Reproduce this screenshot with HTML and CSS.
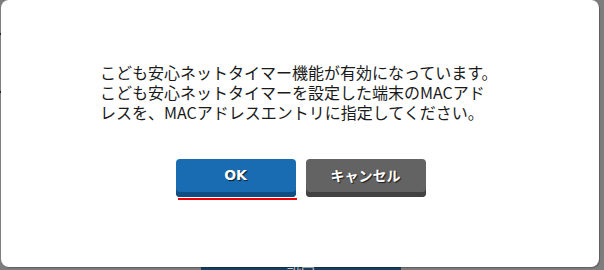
FILE: index.html
```html
<!DOCTYPE html>
<html lang="ja">
<head>
<meta charset="utf-8">
<title>確認</title>
<link rel="stylesheet" href="styles.css">
</head>
<body>
<div class="page">
  <div class="page-spacer">
    <span class="tick tick-a"></span>
    <span class="tick tick-b"></span>
  </div>
  <div class="page-footer">
    <div class="page-bar"><span class="page-bar-text">設定</span></div>
  </div>
</div>
<div class="dialog">
  <p class="message">こども安心ネットタイマー機能が有効になっています。<br>こども安心ネットタイマーを設定した端末のMACアド<br>レスを、MACアドレスエントリに指定してください。</p>
  <div class="actions">
    <button class="btn btn-ok" type="button">OK</button>
    <button class="btn btn-cancel" type="button">キャンセル</button>
  </div>
</div>
</body>
</html>
```
FILE: styles.css
```css
html, body {
  margin: 0;
  padding: 0;
}
body {
  width: 604px;
  height: 270px;
  overflow: hidden;
  background: #7d7d7d;
  font-family: "Noto Sans CJK JP", "Noto Sans", sans-serif;
  position: relative;
}
.page {
  display: flex;
  flex-direction: column;
  height: 270px;
}
.page-spacer {
  flex: 1;
  display: flex;
  flex-direction: column;
}
.tick {
  display: block;
  width: 1px;
  background: #1e1e1e;
}
.tick-a {
  height: 2px;
  margin-top: 33px;
}
.tick-b {
  height: 2px;
  margin-top: 56px;
}
.page-footer {
  height: 3px;
  display: flex;
  padding-left: 201px;
}
.page-bar {
  width: 200px;
  height: 3px;
  background: #173f5f;
  display: flex;
  justify-content: center;
  overflow: hidden;
}
.page-bar-text {
  color: #c8ccd0;
  font-size: 14px;
  line-height: 14px;
  margin-top: -3px;
}
.dialog {
  position: absolute;
  left: 1px;
  top: 0;
  width: 598px;
  height: 267px;
  background: #ffffff;
  border-radius: 8px;
  box-shadow: 1px 1px 1px rgba(0, 0, 0, 0.25);
  box-sizing: border-box;
  padding-top: 62px;
  display: flex;
  flex-direction: column;
  align-items: center;
}
.message {
  margin: 0 0 0 2px;
  width: 402px;
  font-size: 16px;
  line-height: 20px;
  color: #1a1a1a;
  text-align: left;
  white-space: nowrap;
}
.actions {
  margin-top: 37px;
  display: flex;
  gap: 10px;
  margin-left: 1px;
}
.btn {
  position: relative;
  width: 120px;
  height: 38px;
  padding: 0 0 5px;
  margin: 0;
  border: none;
  border-radius: 4px;
  color: #ffffff;
  font-weight: bold;
  font-size: 14px;
  line-height: 33px;
  text-shadow: 1px 1px 1px rgba(0, 0, 0, 0.75);
  cursor: pointer;
}
.btn-ok {
  background: #1a6cb2;
  box-shadow: inset 0 -5px 0 #0f4d82;
  font-family: "DejaVu Sans", "Noto Sans CJK JP", sans-serif;
}
.btn-ok::after {
  content: "";
  position: absolute;
  left: 2px;
  bottom: -3px;
  width: 119px;
  height: 2px;
  background: #ee0000;
}
.btn-cancel {
  background: #636363;
  box-shadow: inset 0 -5px 0 #424242;
  font-family: "Noto Sans CJK JP", sans-serif;
}
```
